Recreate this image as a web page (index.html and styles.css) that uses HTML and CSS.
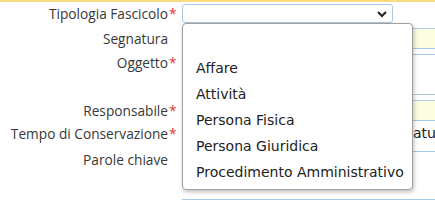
FILE: index.html
```html
<!DOCTYPE html>
<html lang="it">
<head>
  <meta charset="UTF-8">
  <title>Fascicolo</title>
  <link rel="stylesheet" href="styles.css">
</head>
<body>
  <div class="form">
    <div class="row row-center">
      <label class="label">Tipologia Fascicolo<span class="req">*</span></label>
      <div class="select-box">
        <svg class="chevron" width="10" height="7" viewBox="0 0 10 7"><polyline points="1,1 5,5 9,1" fill="none" stroke="#222" stroke-width="2"/></svg>
      </div>
    </div>

    <div class="row row-center">
      <label class="label">Segnatura<span class="req"></span></label>
      <div class="input input-yellow"></div>
    </div>

    <div class="row">
      <label class="label">Oggetto<span class="req">*</span></label>
      <div class="input input-area"></div>
    </div>

    <div class="row row-center">
      <label class="label">Responsabile<span class="req">*</span></label>
      <div class="input input-yellow"></div>
    </div>

    <div class="row row-tempo">
      <label class="label label-tempo">Tempo di Conservazione<span class="req">*</span></label>
      <div class="input input-tempo"><span class="value">Candidatura</span></div>
    </div>

    <div class="row row-parole">
      <label class="label label-parole">Parole chiave<span class="req"></span></label>
      <div class="input input-parole"></div>
    </div>

    <!-- opened select list -->
    <div class="dropdown">
      <div class="option">&nbsp;</div>
      <div class="option">Affare</div>
      <div class="option">Attività</div>
      <div class="option">Persona Fisica</div>
      <div class="option">Persona Giuridica</div>
      <div class="option">Procedimento Amministrativo</div>
    </div>
  </div>
</body>
</html>
```

FILE: styles.css
```css
body {
  margin: 0;
  background-color: #ffffff;
  font-family: "Open Sans", Arial, sans-serif;
  font-size: 13.7px;
  color: #383838;
  overflow: hidden;
}

.form {
  position: relative;
  width: 470px;
  border-top: 2px solid #f8db7e;
  padding-top: 2px;
}

.row {
  display: flex;
  align-items: flex-start;
  gap: 6px;
  margin-top: 5px;
}

.row:first-child {
  margin-top: 0;
}

.row-center {
  align-items: center;
}

.label {
  width: 176px;
  flex-shrink: 0;
  text-align: right;
  line-height: 18px;
}

.req {
  display: inline-block;
  width: 8px;
  text-align: left;
  color: #e53935;
  padding-left: 1px;
  box-sizing: border-box;
}

.label-tempo {
  padding-top: 4px;
}

.label-parole {
  line-height: 15px;
}

.select-box {
  position: relative;
  width: 211px;
  height: 19px;
  box-sizing: border-box;
  border: 1px solid #a9c9e8;
  border-radius: 3px;
  background-color: #ffffff;
}

.chevron {
  position: absolute;
  right: 5px;
  top: 6px;
}

.input {
  flex: 1;
  box-sizing: border-box;
  font-family: "DejaVu Sans", Verdana, sans-serif;
  font-size: 14px;
  color: #222222;
}

.input-yellow {
  height: 21px;
  border: 1px solid #a9c9e8;
  background-color: #fcfcdf;
}

.input-area {
  height: 41px;
  border: 1px solid #a9c9e8;
  background-color: #ffffff;
}

.row-tempo {
  margin-top: 0;
}

.input-tempo {
  height: 31px;
  border-bottom: 1px solid #a9c9e8;
  padding-top: 3px;
  line-height: 18px;
  white-space: nowrap;
}

.input-tempo .value {
  padding-left: 182px;
}

.row-parole {
  margin-top: 0;
}

.input-parole {
  height: 48px;
  border-bottom: 1px solid #a9c9e8;
}

.dropdown {
  position: absolute;
  left: 182px;
  top: 21px;
  width: 231px;
  height: 167px;
  box-sizing: border-box;
  padding: 5px 0 4px 0;
  border: 1px solid #a0a0a0;
  border-radius: 4px;
  background-color: #ffffff;
  box-shadow: 1px 2px 4px rgba(0, 0, 0, 0.25);
  font-family: "DejaVu Sans", Verdana, sans-serif;
  font-size: 14px;
  color: #222222;
}

.option {
  height: 26px;
  line-height: 26px;
  padding-left: 13px;
  white-space: nowrap;
}
```
